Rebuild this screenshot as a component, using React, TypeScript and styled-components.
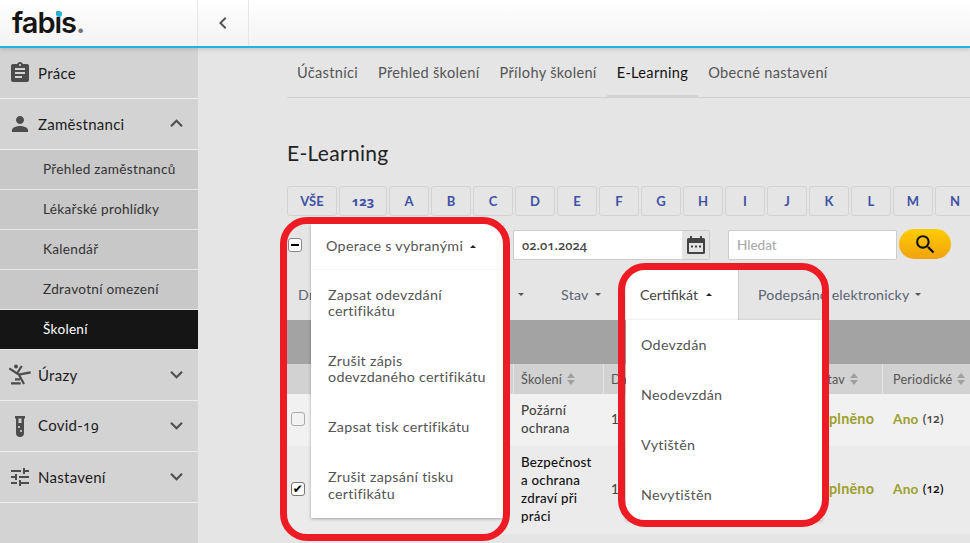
import React from "react";
import styled, { createGlobalStyle } from "styled-components";
import { MdAssignment, MdPerson, MdTune, MdExpandLess, MdExpandMore, MdSearch, MdChevronLeft } from "react-icons/md";

const Global = createGlobalStyle`
  html, body { margin: 0; padding: 0; height: 100%; overflow: hidden; background: #e5e5e5; }
  * { box-sizing: border-box; }
  body { font-family: Lato, "Open Sans", sans-serif; color: #333; }
`;

const Page = styled.div`width: 970px; height: 543px; overflow: hidden; display: flex; flex-direction: column; position: relative;`;
const Header = styled.header`height: 48px; flex: none; display: flex; background: linear-gradient(#fff, #f4f4f4 90%); border-bottom: 2px solid #20b5e0; box-shadow: 0 2px 4px rgba(0,0,0,.12); position: relative; z-index: 3;`;
const LogoCell = styled.div`width: 198px; display: flex; align-items: center; padding: 0 0 2px 12px; border-right: 1px solid #e6e6e6; color: #151515; font: 600 29px/1 "Inter", sans-serif; letter-spacing: -1px;`;
const LogoDotted = styled.span`position: relative;`;
const Dot = styled.i`position: absolute; left: 1px; top: 3px; width: 6px; height: 6px; border-radius: 50%; background: #20b5e0;`;
const Period = styled.span`color: #777; font-size: 29px;`;
const BackCell = styled.div`width: 51px; display: flex; align-items: center; justify-content: center; border-right: 1px solid #e6e6e6; color: #555; font-size: 24px;`;
const Body = styled.div`flex: 1; display: flex; min-height: 0;`;
const Side = styled.nav`width: 198px; flex: none; background: #d3d3d3;`;
const MainItem = styled.div`height: 51px; display: flex; align-items: center; padding: 0 12px 1px 8px; border-bottom: 1px solid #eee; font-size: 15px; letter-spacing: .27px; color: #1c1c1c;`;
const ItemIcon = styled.span`width: 24px; display: flex; justify-content: center; margin-right: 6px; color: #4c4c4c; font-size: 24px;`;
const ItemLabel = styled.span`flex: 1;`;
const OldNums = styled.span`font-family: "Noto Sans", sans-serif; font-variant-numeric: oldstyle-nums; font-size: .92em;`;
const Caret = styled.span`display: flex; color: #505050; font-size: 25px; margin-right: -3px;`;
const SubItem = styled.div<{ $active?: boolean }>`height: 40px; display: flex; align-items: center; padding: 0 0 2px 43px; border-bottom: 1px solid #e8e8e8; font-size: 13.6px; letter-spacing: .3px; color: ${p => p.$active ? "#fff" : "#333"}; background: ${p => p.$active ? "#151515" : "#c8c8c8"};`;
const Main = styled.main`flex: 1; min-width: 0; padding: 0 0 0 89px; position: relative; overflow: hidden;`;
const Tabs = styled.div`display: flex; height: 50px; width: 683px; border-bottom: 1px solid #d0d0d0;`;
const Tab = styled.div<{ $active?: boolean }>`padding: 0 10px 2px; height: 50px; display: flex; align-items: center; font-size: 14.6px; letter-spacing: .3px; color: ${p => p.$active ? "#111" : "#555"}; border-bottom: ${p => p.$active ? "3px solid #d3d3d3" : "0"}; padding-top: ${p => p.$active ? "3px" : "0"};`;
const Title = styled.h1`margin: 43px 0 21px; font-size: 21px; line-height: 24px; font-weight: 400; letter-spacing: .3px; color: #222;`;
const Letters = styled.div`display: flex; gap: 2px; width: 700px;`;
const Letter = styled.div<{ $w?: number }>`flex: none; width: ${p => p.$w ?? 40}px; height: 30px; display: flex; align-items: center; justify-content: center; border: 1px solid #d2d2d2; border-radius: 3px; color: #3f51a5; font-size: 13px; font-weight: 700; font-family: ${p => p.$w === 48 ? '"Open Sans", sans-serif' : "inherit"}; font-variant-numeric: oldstyle-nums;`;
const Toolbar = styled.div`display: flex; align-items: center; height: 30px; margin-top: 14px;`;
const SmallBox = styled.div<{ $dim?: boolean }>`width: 14px; height: 14px; flex: none; border: 1px solid ${p => p.$dim ? "#aaa" : "#777"}; border-radius: 3px; background: ${p => p.$dim ? "#f2f2f2" : "#fff"}; display: flex; align-items: center; justify-content: center; color: #000; font: 12px/1 "DejaVu Sans", sans-serif;`;
const HeadBox = styled(SmallBox)`margin-left: 1px; border-color: #888;`;
const Dash = styled.i`width: 8px; height: 2px; background: #000;`;
const DateInput = styled.div`margin-left: 211px; width: 169px; height: 30px; padding: 0 8px; display: flex; align-items: center; background: #fff; border: 1px solid #ccc; border-right: 0; border-radius: 2px 0 0 2px; font: 500 13px "Noto Sans", sans-serif; font-variant-numeric: oldstyle-nums; letter-spacing: 0; color: #444;`;
const DateAddon = styled.div`width: 28px; height: 30px; display: flex; align-items: center; justify-content: center; border: 1px solid #ccc; border-left: 0; border-radius: 0 2px 2px 0; background: #e4e4e4;`;
const SearchField = styled.div`margin-left: 18px; width: 169px; height: 30px; padding: 0 8px; display: flex; align-items: center; background: #fff; border: 1px solid #ccc; border-radius: 2px; color: #aaa; font-size: 13.5px; font-weight: 500;`;
const SearchBtn = styled.div`margin: -2px 0 0 2px; width: 52px; height: 30px; display: flex; align-items: center; justify-content: center; border-radius: 15px; background: linear-gradient(#ffcd00, #f0a210); color: #111; font-size: 25px;`;
const Filters = styled.div`display: flex; align-items: center; height: 50px; margin-top: 10px; color: #5c6470; font-size: 14.2px; letter-spacing: .25px;`;
const FilterItem = styled.div`flex: none; padding: 0 0 2px 11px; display: flex; align-items: center; gap: 6px; white-space: nowrap;`;
const HiddenFilter = styled(FilterItem)`width: 220px;`;
const StavFilter = styled(FilterItem)`width: 76px; margin-left: 26px;`;
const SignedFilter = styled(FilterItem)`width: 240px; padding-left: 19px; letter-spacing: .13px;`;
const Arrow = styled.i<{ $up?: boolean }>`width: 0; height: 0; border-left: 3px solid transparent; border-right: 3px solid transparent; ${p => p.$up ? "border-bottom: 3px solid #222;" : "border-top: 3px solid #555;"}`;
const ActiveFilter = styled.div`flex: none; width: 113px; height: 50px; padding: 0 0 2px 14px; display: flex; align-items: center; gap: 8px; background: #fff; border-right: 1px solid #ccc; color: #444; letter-spacing: 0;`;
const Band = styled.div`height: 44px; background: #a3a3a3; width: 683px;`;
const Table = styled.div`width: 700px; display: grid; grid-template-columns: 227px 90px 180px 99px 88px 16px; grid-auto-rows: auto;`;
const Th = styled.div`height: 30px; background: #d2d2d2; border-right: 1px solid #e4e4e4; display: flex; align-items: center; padding-left: 7px; gap: 5px; font-size: 12.6px; color: #555; letter-spacing: .2px; white-space: nowrap;`;
const PeriodTh = styled(Th)`padding-left: 10px;`;
const StavTh = styled(Th)`padding: 0 24px 0 0; justify-content: flex-end;`;
const Sort = styled.svg`width: 8px; height: 12px; flex: none; fill: #a0a0a0;`;
const Td = styled.div<{ $bg: string; $h: number; $strong?: boolean }>`height: ${p => p.$h}px; background: ${p => p.$bg}; display: flex; align-items: center; padding: 0 0 2px 7px; font-size: 13.3px; line-height: 18px; font-weight: 500; letter-spacing: .25px; color: ${p => p.$strong ? "#111" : "#444"}; white-space: nowrap;`;
const CheckCell = styled(Td)`padding-left: 4px;`;
const PeriodTd = styled(Td)`padding-left: 10px; font-size: 13.6px;`;
const StavTd = styled(Td)`padding-left: 37px; font-size: 14.3px;`;
const Ok = styled.b`color: #9ba02b; font-weight: 700;`;
const Count = styled.span`margin-left: 4px; font-family: "Noto Sans", sans-serif; font-variant-numeric: oldstyle-nums; font-size: 12px; letter-spacing: 0;`;
const Menu = styled.div<{ $l: number; $t: number; $w: number; $h: number }>`position: absolute; left: ${p => p.$l - 198}px; top: ${p => p.$t}px; width: ${p => p.$w}px; height: ${p => p.$h}px; background: #fff; box-shadow: 0 1px 3px rgba(0,0,0,.3); z-index: 2; color: #555; font-size: 14.3px; letter-spacing: .28px; line-height: 16.5px;`;
const MenuHead = styled.div`height: 46px; padding: 0 0 1px 15px; display: flex; align-items: center; gap: 7px; border-bottom: 1px solid #f5f5f5; color: #555;`;
const MenuItem = styled.div<{ $h: number; $pad?: number }>`height: ${p => p.$h}px; padding: 0 4px 0 ${p => p.$pad ?? 17}px; display: flex; align-items: center;`;
const Ring = styled.div<{ $l: number; $t: number; $w: number; $h: number }>`position: absolute; left: ${p => p.$l}px; top: ${p => p.$t}px; width: ${p => p.$w}px; height: ${p => p.$h}px; border: 7px solid #ed1c24; border-radius: 27px; z-index: 5;`;

const SortIcon = () => <Sort viewBox="0 0 8 12"><path d="M4 0l4 5H0zM4 12L0 7h8z" /></Sort>;

const letters = "ABCDEFGHIJKLMN".split("");
const navTail = [
  {
    key: "urazy",
    label: "Úrazy",
    icon: (
      <svg width="24" height="24" viewBox="0 0 24 24" fill="none" stroke="#4c4c4c" strokeWidth="2.200" strokeLinecap="butt">
        <circle cx="8" cy="3.500" r="2" fill="#4c4c4c" stroke="none" />
        <path d="M1.300 5.300L9 10.500 13.700 3M9.500 11l2.500.300 10.700-2M10.500 11l5.500 10M3 20.300h9.700M7 16.300h5" />
      </svg>
    ),
  },
  {
    key: "covid",
    label: <>Covid-<OldNums>19</OldNums></>,
    icon: (
      <svg width="24" height="24" viewBox="0 0 24 24" fill="#4c4c4c">
        <path d="M7 2h10v2.500h-1V19a4 4 0 0 1-8 0V4.500H7zM10.500 4.500V9h3V4.500z" />
        <circle cx="11" cy="13" r="1.100" fill="#d3d3d3" />
        <circle cx="13" cy="17" r="1.100" fill="#d3d3d3" />
      </svg>
    ),
  },
  { key: "nastaveni", label: "Nastavení", icon: <MdTune /> },
];

export default function App() {
  return (
    <Page>
      <Global />
      <Header>
        <LogoCell>fab<LogoDotted>i<Dot /></LogoDotted>s<Period>.</Period></LogoCell>
        <BackCell><MdChevronLeft /></BackCell>
      </Header>
      <Body>
        <Side>
          <MainItem><ItemIcon><MdAssignment /></ItemIcon><ItemLabel>Práce</ItemLabel></MainItem>
          <MainItem><ItemIcon><MdPerson /></ItemIcon><ItemLabel>Zaměstnanci</ItemLabel><Caret><MdExpandLess /></Caret></MainItem>
          <SubItem>Přehled zaměstnanců</SubItem>
          <SubItem>Lékařské prohlídky</SubItem>
          <SubItem>Kalendář</SubItem>
          <SubItem>Zdravotní omezení</SubItem>
          <SubItem $active>Školení</SubItem>
          {navTail.map(n => (
            <MainItem key={n.key}><ItemIcon>{n.icon}</ItemIcon><ItemLabel>{n.label}</ItemLabel><Caret><MdExpandMore /></Caret></MainItem>
          ))}
        </Side>
        <Main>
          <Tabs>
            <Tab>Účastníci</Tab><Tab>Přehled školení</Tab><Tab>Přílohy školení</Tab><Tab $active>E-Learning</Tab><Tab>Obecné nastavení</Tab>
          </Tabs>
          <Title>E-Learning</Title>
          <Letters>
            <Letter $w={50}>VŠE</Letter>
            <Letter $w={48}>123</Letter>
            {letters.map(l => <Letter key={l}>{l}</Letter>)}
          </Letters>
          <Toolbar>
            <HeadBox><Dash /></HeadBox>
            <DateInput>02.01.2024</DateInput>
            <DateAddon>
              <svg width="20" height="20" viewBox="0 0 20 20" fill="#444"><path fillRule="evenodd" d="M4 1h2v2h8V1h2v2h1.500A1.500 1.500 0 0 1 19 4.500v13a1.500 1.500 0 0 1-1.500 1.500h-15A1.500 1.500 0 0 1 1 17.500v-13A1.500 1.500 0 0 1 2.500 3H4zM3 8v9h14V8z"/><path d="M5 10.500h2v2H5zM9 10.500h2v2H9zM13 10.500h2v2h-2z"/></svg>
            </DateAddon>
            <SearchField>Hledat</SearchField>
            <SearchBtn><MdSearch /></SearchBtn>
          </Toolbar>
          <Filters>
            <HiddenFilter>Druh</HiddenFilter>
            <FilterItem><Arrow /></FilterItem>
            <StavFilter>Stav <Arrow /></StavFilter>
            <ActiveFilter>Certifikát <Arrow $up /></ActiveFilter>
            <SignedFilter>Podepsáno elektronicky <Arrow /></SignedFilter>
          </Filters>
          <Band />
          <Table>
            <Th /><Th>Školení <SortIcon /></Th><Th>Datum <SortIcon /></Th><StavTh>Stav <SortIcon /></StavTh><PeriodTh>Periodické <SortIcon /></PeriodTh><Th />
            <CheckCell $bg="#f1f1f1" $h={52}><SmallBox $dim /></CheckCell>
            <Td $bg="#f1f1f1" $h={52}>Požární<br />ochrana</Td>
            <Td $bg="#f1f1f1" $h={52}>1</Td>
            <StavTd $bg="#f1f1f1" $h={52}><Ok>Splněno</Ok></StavTd>
            <PeriodTd $bg="#f1f1f1" $h={52}><Ok>Ano</Ok><Count>(12)</Count></PeriodTd>
            <Td $bg="#f1f1f1" $h={52} />
            <CheckCell $bg="#ebebeb" $h={88}><SmallBox>✔</SmallBox></CheckCell>
            <Td $bg="#ebebeb" $h={88} $strong>Bezpečnost<br />a ochrana<br />zdraví při<br />práci</Td>
            <Td $bg="#ebebeb" $h={88}>1</Td>
            <StavTd $bg="#ebebeb" $h={88}><Ok>Splněno</Ok></StavTd>
            <PeriodTd $bg="#ebebeb" $h={88} $strong><Ok>Ano</Ok><Count>(12)</Count></PeriodTd>
            <Td $bg="#ebebeb" $h={88} />
          </Table>
          <Menu $l={311} $t={176} $w={192} $h={294}>
            <MenuHead>Operace s vybranými <Arrow $up /></MenuHead>
            <MenuItem $h={66}>Zapsat odevzdání<br />certifikátu</MenuItem>
            <MenuItem $h={66}>Zrušit zápis<br />odevzdaného certifikátu</MenuItem>
            <MenuItem $h={50}>Zapsat tisk certifikátu</MenuItem>
            <MenuItem $h={67}>Zrušit zapsání tisku<br />certifikátu</MenuItem>
          </Menu>
          <Menu $l={626} $t={272} $w={196} $h={200}>
            <MenuItem $h={50} $pad={15}>Odevzdán</MenuItem>
            <MenuItem $h={50} $pad={15}>Neodevzdán</MenuItem>
            <MenuItem $h={50} $pad={15}>Vytištěn</MenuItem>
            <MenuItem $h={50} $pad={15}>Nevytištěn</MenuItem>
          </Menu>
        </Main>
      </Body>
      <Ring $l={280} $t={217} $w={230} $h={324} />
      <Ring $l={618} $t={263} $w={211} $h={264} />
    </Page>
  );
}
